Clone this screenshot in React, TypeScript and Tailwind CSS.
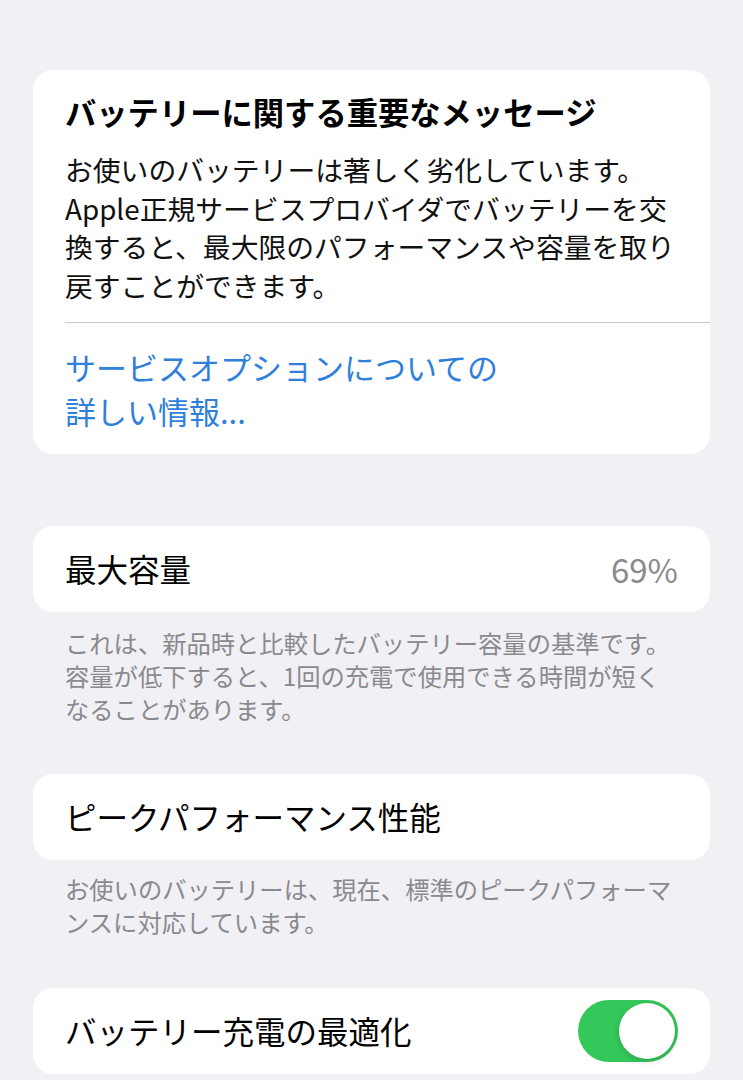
const font = { fontFamily: '"Noto Sans CJK JP", "Noto Sans", sans-serif' };

function Toggle() {
  return (
    <div className="flex h-[62px] w-[100px] items-center justify-end rounded-full bg-[#34c759] p-[3px]">
      <div className="h-[56px] w-[56px] rounded-full bg-white shadow-[0_2px_6px_rgba(0,0,0,0.18)]" />
    </div>
  );
}

function Row({ label, right }: { label: string; right?: React.ReactNode }) {
  return (
    <div className="flex h-[86px] items-center justify-between rounded-[20px] bg-white pl-[32px] pr-[32px]">
      <span className="text-[31.5px] leading-none text-black">{label}</span>
      {right}
    </div>
  );
}

function Note({ children }: { children: React.ReactNode }) {
  return (
    <p className="whitespace-nowrap pl-[32px] text-[24.3px] leading-[33px] text-[#8a8a8e]">
      {children}
    </p>
  );
}

export default function App() {
  return (
    <div
      className="flex min-h-[1080px] w-full flex-col bg-[#f0f0f5] px-[33px] pt-[70px]"
      style={font}
    >
      <div className="flex flex-col rounded-[20px] bg-white pb-[21px] pt-[22px]">
        <h2 className="pl-[32px] text-[31.3px] font-bold leading-[40px] text-black">
          バッテリーに関する重要なメッセージ
        </h2>
        <p className="mt-[18px] whitespace-nowrap pl-[32px] text-[27.8px] leading-[38.5px] text-[#111]">
          お使いのバッテリーは著しく劣化しています。
          <br />
          Apple正規サービスプロバイダでバッテリーを交
          <br />
          換すると、最大限のパフォーマンスや容量を取り
          <br />
          戻すことができます。
        </p>
        <div className="ml-[32px] mt-[18px] h-px bg-[#c8c8cc]" />
        <p className="mt-[22px] pl-[32px] text-[31px] leading-[44px] text-[#2f7fdc]">
          サービスオプションについての
          <br />
          詳しい情報...
        </p>
      </div>

      <div className="mt-[72px]">
        <Row
          label="最大容量"
          right={<span className="text-[33px] leading-none text-[#8a8a8e]">69%</span>}
        />
      </div>
      <div className="mt-[14px]">
        <Note>
          これは、新品時と比較したバッテリー容量の基準です。
          <br />
          容量が低下すると、1回の充電で使用できる時間が短く
          <br />
          なることがあります。
        </Note>
      </div>

      <div className="mt-[49px]">
        <Row label="ピークパフォーマンス性能" />
      </div>
      <div className="mt-[12px]">
        <Note>
          お使いのバッテリーは、現在、標準のピークパフォーマ
          <br />
          ンスに対応しています。
        </Note>
      </div>

      <div className="mt-[50px]">
        <Row label="バッテリー充電の最適化" right={<Toggle />} />
      </div>
    </div>
  );
}
